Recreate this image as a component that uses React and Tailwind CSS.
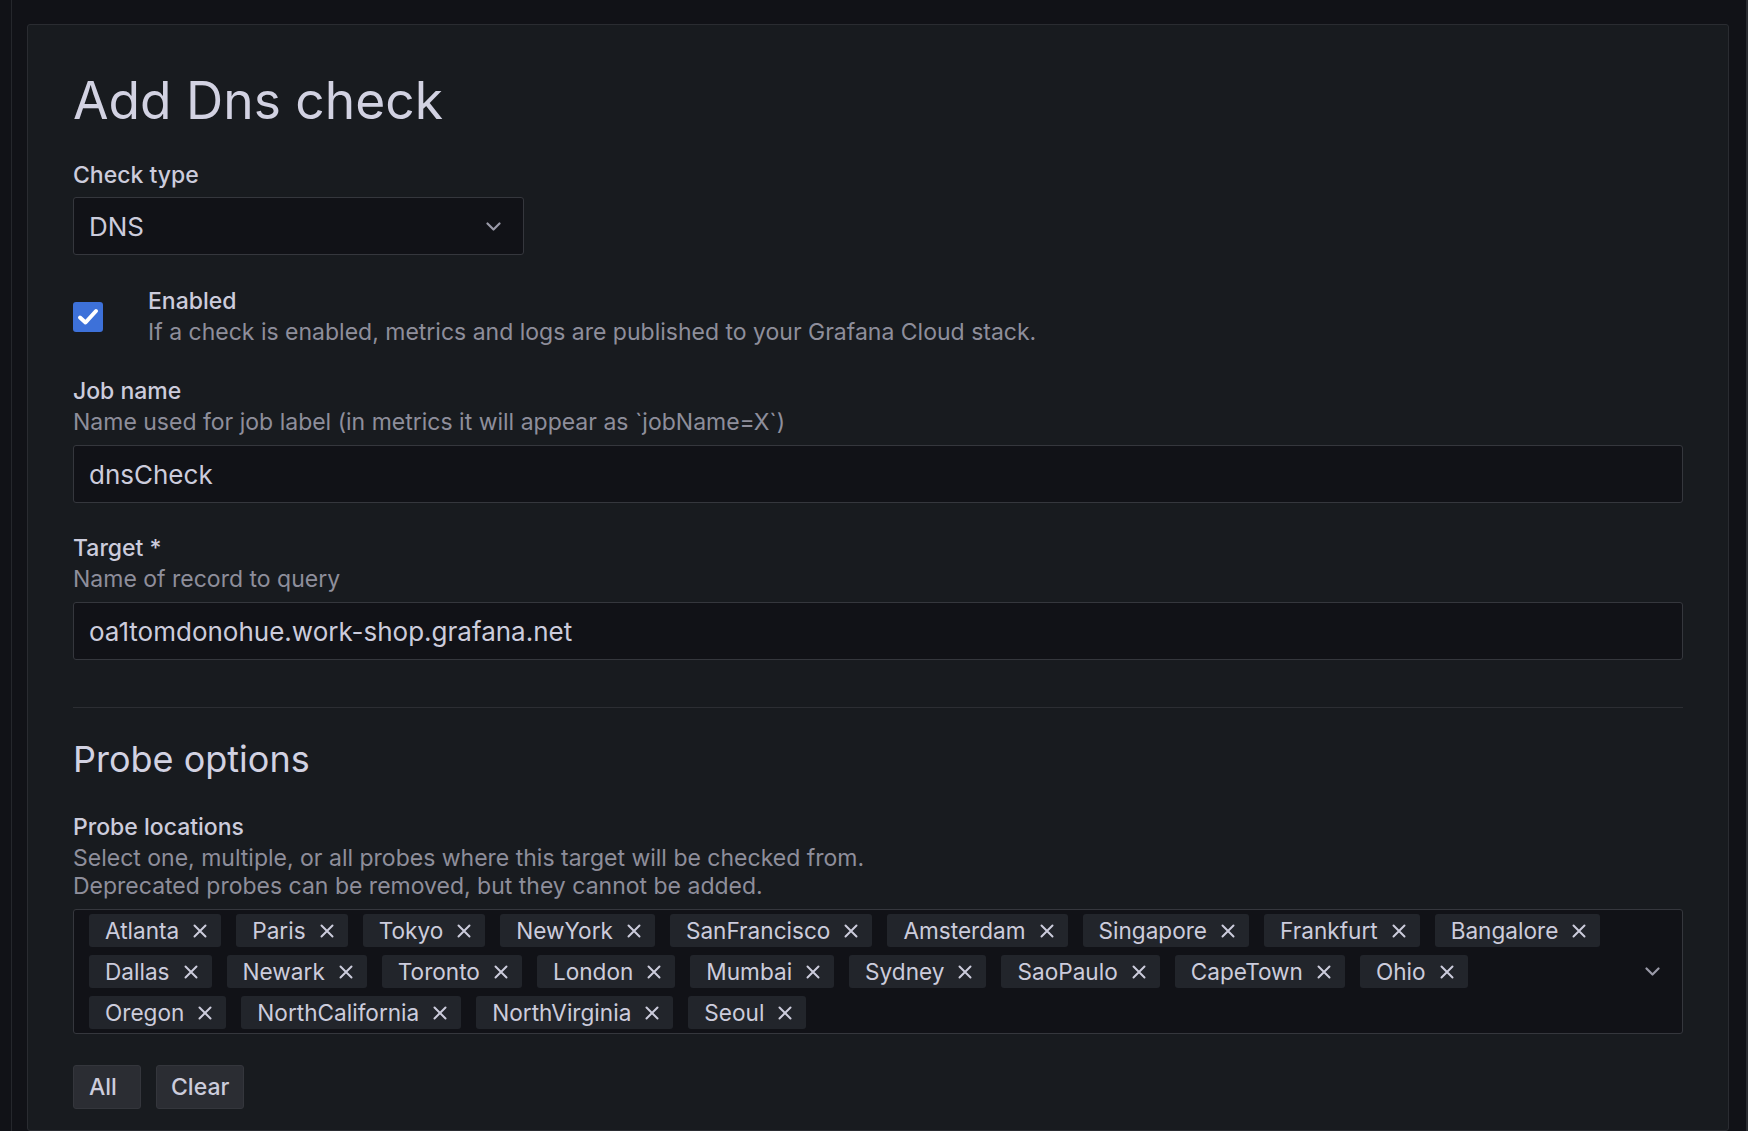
import React from 'react';

const rows = [
  ['Atlanta', 'Paris', 'Tokyo', 'NewYork', 'SanFrancisco', 'Amsterdam', 'Singapore', 'Frankfurt', 'Bangalore'],
  ['Dallas', 'Newark', 'Toronto', 'London', 'Mumbai', 'Sydney', 'SaoPaulo', 'CapeTown', 'Ohio'],
  ['Oregon', 'NorthCalifornia', 'NorthVirginia', 'Seoul'],
];

const Chevron = () => (
  <svg width="15" height="9" viewBox="0 0 15 9" fill="none">
    <path d="M1.5 1.5l6 6 6-6" stroke="#9a9aa8" strokeWidth="2.2" strokeLinecap="round" strokeLinejoin="round" />
  </svg>
);

const Cross = () => (
  <svg width="14" height="14" viewBox="0 0 14 14" fill="none">
    <path d="M1.5 1.5l11 11M12.5 1.5l-11 11" stroke="#ccccdc" strokeWidth="2" strokeLinecap="round" />
  </svg>
);

const Field = ({ label, description, children }) => (
  <div className="mb-[30px]">
    <div className="text-[23px] leading-[30px] font-medium text-[#ccccdc]">{label}</div>
    {description && <div className="text-[23px] leading-[32px] text-[#8e8e9b]">{description}</div>}
    <div className="mt-[7px]">{children}</div>
  </div>
);

const TextInput = ({ value }) => (
  <div className="h-[58px] w-full flex items-center px-[15px] bg-[#111217] border border-[#35373d] rounded-[3px] text-[26px] text-[#ccccdc]">
    {value}
  </div>
);

const App = () => {
  return (
    <div className="h-[1131px] overflow-hidden bg-[#111217] flex font-['Inter',sans-serif]">
      {/* side strip */}
      <div className="w-[12px] shrink-0 border-r border-[#25272c]" />

      <div className="flex-1 pt-[24px] pl-[15px] pr-[17px] flex">
        {/* Form panel */}
        <div className="flex-1 bg-[#181b1f] border border-[#2a2c31] rounded-[3px] px-[45px] pt-[45px] pb-[45px]">
          <h1 className="text-[51.5px] leading-[60px] font-normal text-[#d2d2e2] mb-[30px]">Add Dns check</h1>

          <div className="mb-[31px]">
            <div className="text-[23px] leading-[30px] font-medium text-[#ccccdc]">Check type</div>
            <div className="mt-[7px] w-[451px] h-[58px] flex items-center justify-between pl-[15px] pr-[22px] bg-[#111217] border border-[#35373d] rounded-[3px]">
              <span className="text-[26px] text-[#ccccdc]">DNS</span>
              <Chevron />
            </div>
          </div>

          <div className="flex mb-[28px]">
            <div className="w-[75px] shrink-0 pt-[16px]">
              <div className="w-[30px] h-[30px] rounded-[3px] bg-[#3d71d9] flex items-center justify-center">
                <svg width="22" height="18" viewBox="0 0 22 18" fill="none">
                  <path d="M3 9.5l5.5 5L19 3" stroke="#ffffff" strokeWidth="4" strokeLinecap="round" strokeLinejoin="round" />
                </svg>
              </div>
            </div>
            <div>
              <div className="text-[23px] leading-[30px] font-medium text-[#ccccdc]">Enabled</div>
              <div className="text-[23px] leading-[32px] text-[#8e8e9b]">
                If a check is enabled, metrics and logs are published to your Grafana Cloud stack.
              </div>
            </div>
          </div>

          <Field label="Job name" description="Name used for job label (in metrics it will appear as `jobName=X`)">
            <TextInput value="dnsCheck" />
          </Field>

          <Field label="Target *" description="Name of record to query">
            <TextInput value="oa1tomdonohue.work-shop.grafana.net" />
          </Field>

          <div className="border-t border-[#2c2e33] mt-[47px]" />

          <h3 className="text-[36px] leading-[43px] font-normal text-[#d2d2e2] mt-[30px] mb-[31px]">Probe options</h3>

          <div className="text-[23px] leading-[30px] font-medium text-[#ccccdc]">Probe locations</div>
          <div className="text-[23px] leading-[28px] text-[#8e8e9b] mt-[2px]">
            <div>Select one, multiple, or all probes where this target will be checked from.</div>
            <div>Deprecated probes can be removed, but they cannot be added.</div>
          </div>

          <div className="mt-[9px] flex items-center bg-[#111217] border border-[#35373d] rounded-[3px] pl-[15px] pr-[22px] py-[4px]">
            <div className="flex-1 flex flex-col gap-[8px]">
              {rows.map((row, i) => (
                <div key={i} className="flex gap-[15px]">
                  {row.map((name) => (
                    <div key={name} className="h-[33px] flex items-center gap-[14px] pl-[16px] pr-[14px] bg-[#22252b] rounded-[3px] text-[22.6px] text-[#ccccdc]">
                      <span>{name}</span>
                      <Cross />
                    </div>
                  ))}
                </div>
              ))}
            </div>
            <Chevron />
          </div>

          <div className="flex gap-[15px] mt-[31px]">
            <button className="h-[44px] w-[68px] text-left px-[15px] bg-[#2b2d33] border border-[#34363c] rounded-[3px] text-[23px] font-medium text-[#ccccdc]">All</button>
            <button className="h-[44px] px-[14px] bg-[#2b2d33] border border-[#34363c] rounded-[3px] text-[23px] font-medium text-[#ccccdc]">Clear</button>
          </div>
        </div>
      </div>

      <div className="w-[2px] shrink-0 bg-[#2a2c31]" />
    </div>
  );
};

export default App;
